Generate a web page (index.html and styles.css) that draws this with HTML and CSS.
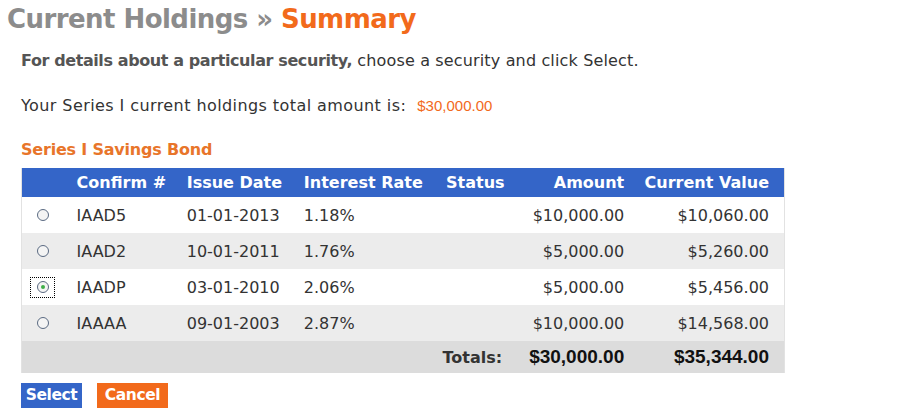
FILE: index.html
```html
<!DOCTYPE html>
<html>
<head>
<meta charset="utf-8">
<link rel="stylesheet" href="styles.css">
</head>
<body>
<h1 class="title"><span class="crumb">Current Holdings &raquo; </span><span class="current">Summary</span></h1>
<div class="content">
  <p class="intro"><b>For details about a particular security,</b> <span class="plain">choose a security and click Select.</span></p>
  <p class="total">Your Series I current holdings total amount is:&nbsp; <span class="total-amt">$30,000.00</span></p>
  <h2 class="section">Series I Savings Bond</h2>
  <table class="holdings">
    <colgroup>
      <col class="w-radio">
      <col class="w-conf">
      <col class="w-date">
      <col class="w-rate">
      <col class="w-status">
      <col class="w-amt">
      <col class="w-val">
    </colgroup>
    <thead>
      <tr>
        <th></th>
        <th>Confirm #</th>
        <th>Issue Date</th>
        <th>Interest Rate</th>
        <th>Status</th>
        <th class="num">Amount</th>
        <th class="num last">Current Value</th>
      </tr>
    </thead>
    <tbody>
      <tr>
        <td class="first"><span class="radio"></span></td>
        <td>IAAD5</td><td>01-01-2013</td><td>1.18%</td><td></td>
        <td class="num">$10,000.00</td><td class="num last">$10,060.00</td>
      </tr>
      <tr class="alt">
        <td class="first"><span class="radio"></span></td>
        <td>IAAD2</td><td>10-01-2011</td><td>1.76%</td><td></td>
        <td class="num">$5,000.00</td><td class="num last">$5,260.00</td>
      </tr>
      <tr>
        <td class="first"><span class="radio checked focused"></span></td>
        <td>IAADP</td><td>03-01-2010</td><td>2.06%</td><td></td>
        <td class="num">$5,000.00</td><td class="num last">$5,456.00</td>
      </tr>
      <tr class="alt">
        <td class="first"><span class="radio"></span></td>
        <td>IAAAA</td><td>09-01-2003</td><td>2.87%</td><td></td>
        <td class="num">$10,000.00</td><td class="num last">$14,568.00</td>
      </tr>
      <tr class="totals">
        <td colspan="5" class="num tot-label">Totals:</td>
        <td class="num tot-val">$30,000.00</td>
        <td class="num tot-val last">$35,344.00</td>
      </tr>
    </tbody>
  </table>
  <div class="buttons">
    <button class="btn btn-select">Select</button>
    <button class="btn btn-cancel">Cancel</button>
  </div>
</div>
</body>
</html>
```

FILE: styles.css
```css
html, body {
  margin: 0;
  padding: 0;
  background: #ffffff;
}
body {
  font-family: "DejaVu Sans", Verdana, sans-serif;
  color: #333333;
}
.title {
  margin: 0;
  padding: 3px 0 0 7px;
  font-size: 26px;
  line-height: 32px;
  font-weight: bold;
  letter-spacing: -0.55px;
}
.crumb { color: #8c8c8c; }
.current { color: #f26a1b; }
.content {
  padding-left: 21px;
}
.intro {
  margin: 16px 0 0 0;
  font-size: 16px;
  line-height: 20px;
  color: #333;
}
.intro b { color: #555; letter-spacing: -0.4px; }
.intro .plain { letter-spacing: 0.15px; }
.total {
  margin: 25px 0 0 0;
  font-size: 16px;
  line-height: 20px;
  letter-spacing: 0.42px;
}
.total-amt {
  font-family: "Liberation Sans", Arial, sans-serif;
  font-size: 15px;
  letter-spacing: 0;
  color: #f26a1b;
}
.section {
  margin: 24px 0 0 0;
  font-size: 16px;
  line-height: 20px;
  font-weight: bold;
  color: #e8752a;
  letter-spacing: -0.2px;
}
.holdings {
  margin-top: 8px;
  width: 764px;
  table-layout: fixed;
  border-collapse: collapse;
  font-size: 16px;
  border-left: 1px solid #e2e2e2;
  border-right: 1px solid #e2e2e2;
}
.w-radio { width: 55px; }
.w-conf { width: 110px; }
.w-date { width: 117px; }
.w-rate { width: 142px; }
.w-status { width: 60px; }
.w-amt { width: 118px; }
.w-val { width: 160px; }
.holdings thead tr {
  background: #3465c8;
  color: #ffffff;
  height: 29px;
}
.holdings th {
  font-weight: bold;
  text-align: left;
  padding: 0;
  white-space: nowrap;
}
.holdings td {
  padding: 0;
  height: 36px;
  white-space: nowrap;
}
.holdings .num { text-align: right; }
.holdings .last { padding-right: 15px; }
.holdings td.first { padding-left: 15px; }
.holdings tbody tr { background: #ffffff; }
.holdings tbody tr.alt { background: #ececec; }
.holdings tbody tr.totals { background: #dcdcdc; }
.holdings tr.totals td { height: 32px; }
.holdings td.tot-label { font-weight: bold; padding-right: 4px; }
.tot-val {
  font-family: "Liberation Sans", Arial, sans-serif;
  font-weight: bold;
  font-size: 19px;
  color: #111;
}
.radio {
  display: inline-block;
  width: 12px;
  height: 12px;
  border-radius: 50%;
  border: 1px solid #5a6a82;
  background: #f4f4f4;
  vertical-align: middle;
  position: relative;
  box-sizing: border-box;
  top: -1px;
}
.radio.checked::after {
  content: "";
  position: absolute;
  left: 3px;
  top: 3px;
  width: 4px;
  height: 4px;
  border-radius: 50%;
  background: #3fae49;
}
.radio.focused::before {
  content: "";
  position: absolute;
  left: -8px;
  top: -5px;
  width: 23px;
  height: 19px;
  border: 1px dotted #000;
}
.buttons {
  display: flex;
  gap: 15px;
  margin-top: 10px;
}
.btn {
  border: none;
  font-family: "DejaVu Sans", Verdana, sans-serif;
  font-weight: bold;
  font-size: 15.5px;
  letter-spacing: -0.4px;
  color: #ffffff;
  height: 25px;
  padding: 0;
  line-height: 25px;
  text-align: center;
}
.btn-select { background: #3465c8; width: 61px; }
.btn-cancel { background: #f26a1b; width: 71px; }
```
